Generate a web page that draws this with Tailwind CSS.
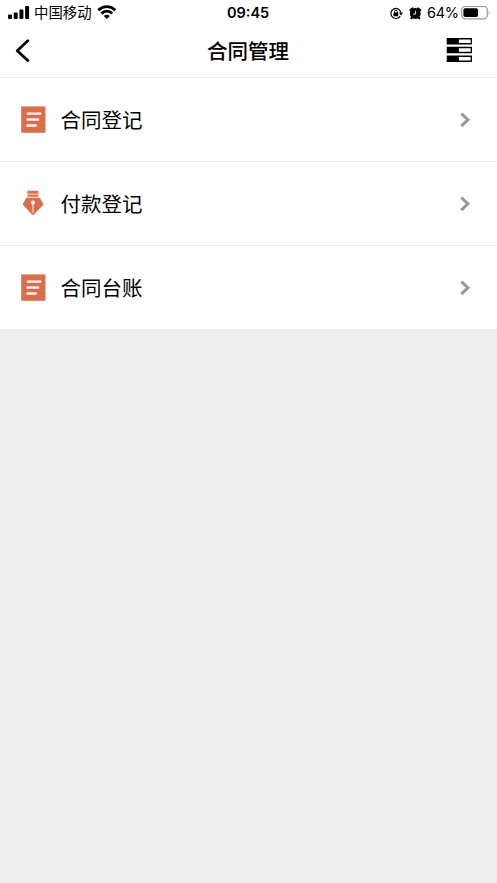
<!DOCTYPE html>
<html lang="zh-CN">
<head>
<meta charset="utf-8">
<title>合同管理</title>
<script src="https://cdn.jsdelivr.net/npm/@tailwindcss/browser@4"></script>
</head>
<body class="min-h-screen bg-[#eeeeee] text-black font-['Inter','Noto_Sans_CJK_SC',sans-serif]">
<div class="bg-white">
  <div class="grid h-[26px] grid-cols-[227px_42px_1fr] items-center leading-none">
    <div class="flex h-[26px] items-center pl-2">
      <svg class="w-[22px] h-[14px] shrink-0" viewBox="0 0 22 14"><rect x="0" y="8.5" width="4" height="4.5" rx="1"/><rect x="5.7" y="6.5" width="4" height="6.5" rx="1"/><rect x="11.4" y="3.5" width="4" height="9.5" rx="1"/><rect x="17.1" y="0" width="4" height="13" rx="1"/></svg>
      <span class="ml-[4px] w-[58px] whitespace-nowrap pt-px text-[14.4px]">中国移动</span>
      <svg class="ml-[5px] -mt-[2px] w-[20px] h-[14px]" viewBox="0 0 20 14" fill="none" stroke="#000" stroke-width="2.8"><path d="M1.3 5.2C6.3.5 13.3.5 18.3 5.2M4.4 8.5C7.5 5.4 12.1 5.4 15.2 8.5"/><path d="M6.8 10.9Q9.8 8.5 12.8 10.9L9.8 14Z" fill="#000" stroke="none"/></svg>
    </div>
    <span class="whitespace-nowrap text-[14.5px] font-semibold">09:45</span>
    <div class="flex h-[26px] items-center pl-[121px]">
      <svg class="w-[13px] h-[13px] shrink-0" viewBox="0 0 13 13"><path d="M10.2 9.1A5 5 0 1 1 10.8 5.4" fill="none" stroke="#000" stroke-width="1.2"/><path d="M8.9 5.5H13l-2 3z"/><rect x="3.6" y="5.6" width="4.6" height="3.7" rx=".5"/><path d="M4.5 6V4.6a1.4 1.4 0 0 1 2.8 0V6" fill="none" stroke="#000"/></svg>
      <svg class="ml-[6px] w-[13px] h-[13px] shrink-0" viewBox="0 0 13 13"><circle cx="6.3" cy="6.5" r="5.4"/><path d="M1.5 3.2 3.5 1.5M9.1 1.5l2 1.7M2.4 11.3l1-1m6.8 1-1-1" stroke="#000" stroke-width="2.2" stroke-linecap="round"/><path d="M6.6 3.7V7H4" fill="none" stroke="#fff" stroke-width=".9"/></svg>
      <span class="ml-[5px] w-[32px] whitespace-nowrap text-[14.5px] tracking-[-0.3px]">64%</span>
      <svg class="ml-[2px] w-[30px] h-[14px] shrink-0" viewBox="0 0 30 14"><rect x=".7" y=".4" width="25.6" height="12.4" rx="3.6" fill="none" stroke="#999" stroke-width="1.2"/><rect x="2.4" y="2.2" width="14.6" height="8.8" rx="1.8"/><path d="M27.7 4.4q1.8 2.1 0 4.2z" fill="#999"/></svg>
    </div>
  </div>
  <header class="grid h-[52px] grid-cols-[1fr_82px_1fr] items-center border-b border-[#eeeeee] pl-[15px] pr-[16px]">
    <svg class="w-[26px] h-[24px] -mt-px" viewBox="0 0 26 24" fill="none" stroke="#000" stroke-width="2.8" stroke-linecap="round" stroke-linejoin="round"><path d="M12.8 1.8 2.3 11.7l10.5 9.9"/></svg>
    <h1 class="whitespace-nowrap text-[20.5px] font-medium leading-[30px]">合同管理</h1>
    <svg class="-mt-[3px] mr-[9px] justify-self-end w-[26px] h-[24px]" viewBox="0 0 26 24"><path d="M.7 0H26v6.4H.7zM.7 8.8H26v6.4H.7zM.7 17.6H26V24H.7z"/><path d="M12.9 1.4h11.8V5H12.9zM12.9 10.2h11.8v3.6H12.9zM12.9 19h11.8v3.6H12.9z" fill="#fff"/></svg>
  </header>
  <main>
    <a class="flex h-[84px] items-center border-b border-[#e8e8e8] pl-[21px] pr-[26px]">
      <svg class="w-[25px] h-[27px]" viewBox="0 0 25 27"><path fill="#d96e4d" d="M.2.4h24.3v26.4H.2z"/><path d="M6 6.4h14.3v2.4H5.7zM5.7 12.3h12.4l-.3 2.4H5.5zM5.7 18.3h10l-.3 2.4h-10z" fill="#fff2ee"/></svg>
      <span class="ml-[14.5px] pt-[2px] text-[20.5px] leading-[30px]">合同登记</span>
      <svg class="ml-auto w-[12px] h-[16px]" viewBox="0 0 12 16" fill="none" stroke="#999" stroke-width="3.1"><path d="m2.3 1.5 6.6 6.3-6.6 6.3"/></svg>
    </a>
    <a class="flex h-[84px] items-center border-b border-[#e8e8e8] pl-[21px] pr-[26px]">
      <svg class="w-[25px] h-[27px]" viewBox="0 0 25 27"><path fill="#d96e4d" d="M6.4.8h11v3h-11zM6.4 4.5h11v2.3h-11zM5.2 7.7h13.6l3.8 6.7L12.8 24.8h-1.6L1.6 14.4z"/><path d="M12 12v11" stroke="#fff" stroke-width="1"/><circle cx="12" cy="12.5" r="2" fill="#fff"/></svg>
      <span class="ml-[14.5px] pt-[2px] text-[20.5px] leading-[30px]">付款登记</span>
      <svg class="ml-auto w-[12px] h-[16px]" viewBox="0 0 12 16" fill="none" stroke="#999" stroke-width="3.1"><path d="m2.3 1.5 6.6 6.3-6.6 6.3"/></svg>
    </a>
    <a class="flex h-[83px] items-center pl-[21px] pr-[26px]">
      <svg class="w-[25px] h-[27px]" viewBox="0 0 25 27"><path fill="#d96e4d" d="M.2.4h24.3v26.4H.2z"/><path d="M6 6.4h14.3v2.4H5.7zM5.7 12.3h12.4l-.3 2.4H5.5zM5.7 18.3h10l-.3 2.4h-10z" fill="#fff2ee"/></svg>
      <span class="ml-[14.5px] pt-[2px] text-[20.5px] leading-[30px]">合同台账</span>
      <svg class="ml-auto w-[12px] h-[16px]" viewBox="0 0 12 16" fill="none" stroke="#999" stroke-width="3.1"><path d="m2.3 1.5 6.6 6.3-6.6 6.3"/></svg>
    </a>
  </main>
</div>
</body>
</html>
